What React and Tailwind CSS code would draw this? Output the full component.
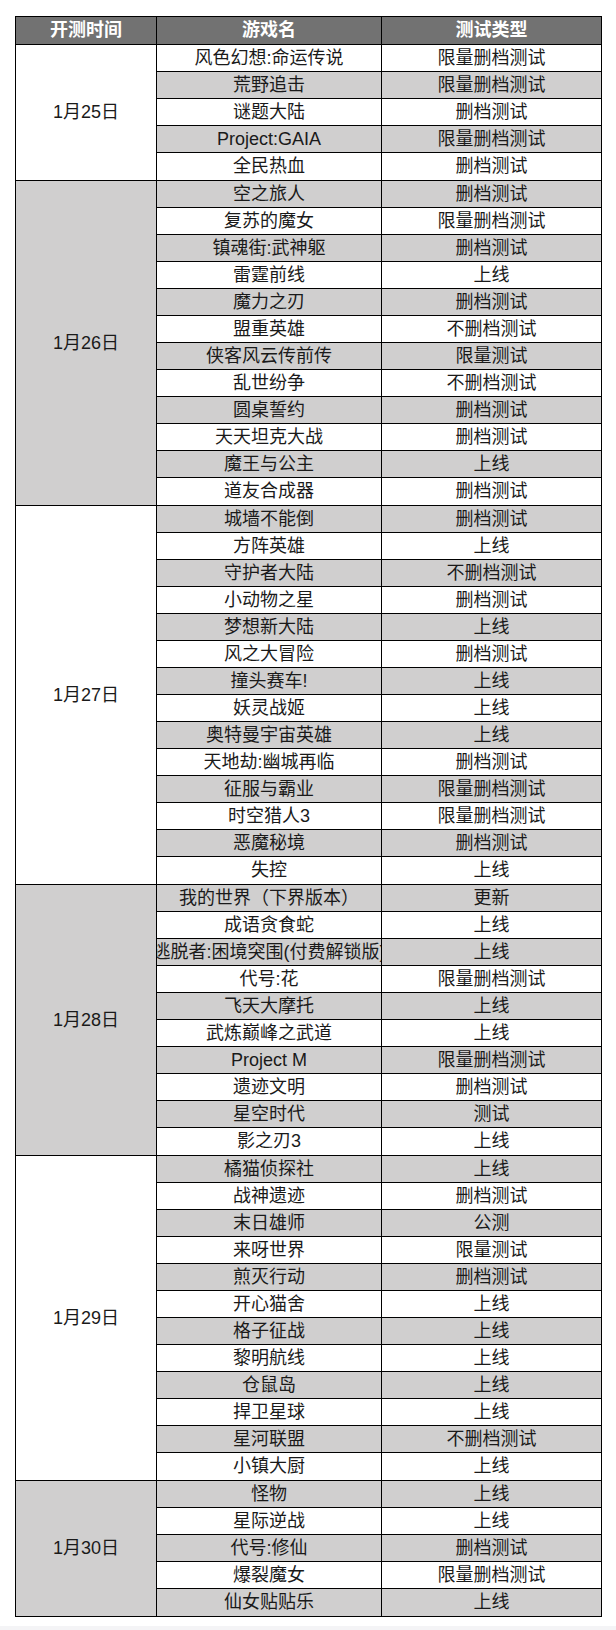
import React from 'react';

const groups = [
  {
    date: '1月25日',
    rows: [
      ['风色幻想:命运传说', '限量删档测试'],
      ['荒野追击', '限量删档测试'],
      ['谜题大陆', '删档测试'],
      ['Project:GAIA', '限量删档测试'],
      ['全民热血', '删档测试'],
    ],
  },
  {
    date: '1月26日',
    rows: [
      ['空之旅人', '删档测试'],
      ['复苏的魔女', '限量删档测试'],
      ['镇魂街:武神躯', '删档测试'],
      ['雷霆前线', '上线'],
      ['魔力之刃', '删档测试'],
      ['盟重英雄', '不删档测试'],
      ['侠客风云传前传', '限量测试'],
      ['乱世纷争', '不删档测试'],
      ['圆桌誓约', '删档测试'],
      ['天天坦克大战', '删档测试'],
      ['魔王与公主', '上线'],
      ['道友合成器', '删档测试'],
    ],
  },
  {
    date: '1月27日',
    rows: [
      ['城墙不能倒', '删档测试'],
      ['方阵英雄', '上线'],
      ['守护者大陆', '不删档测试'],
      ['小动物之星', '删档测试'],
      ['梦想新大陆', '上线'],
      ['风之大冒险', '删档测试'],
      ['撞头赛车!', '上线'],
      ['妖灵战姬', '上线'],
      ['奥特曼宇宙英雄', '上线'],
      ['天地劫:幽城再临', '删档测试'],
      ['征服与霸业', '限量删档测试'],
      ['时空猎人3', '限量删档测试'],
      ['恶魔秘境', '删档测试'],
      ['失控', '上线'],
    ],
  },
  {
    date: '1月28日',
    rows: [
      ['我的世界（下界版本）', '更新'],
      ['成语贪食蛇', '上线'],
      ['逃脱者:困境突围(付费解锁版)', '上线'],
      ['代号:花', '限量删档测试'],
      ['飞天大摩托', '上线'],
      ['武炼巅峰之武道', '上线'],
      ['Project M', '限量删档测试'],
      ['遗迹文明', '删档测试'],
      ['星空时代', '测试'],
      ['影之刃3', '上线'],
    ],
  },
  {
    date: '1月29日',
    rows: [
      ['橘猫侦探社', '上线'],
      ['战神遗迹', '删档测试'],
      ['末日雄师', '公测'],
      ['来呀世界', '限量测试'],
      ['煎灭行动', '删档测试'],
      ['开心猫舍', '上线'],
      ['格子征战', '上线'],
      ['黎明航线', '上线'],
      ['仓鼠岛', '上线'],
      ['捍卫星球', '上线'],
      ['星河联盟', '不删档测试'],
      ['小镇大厨', '上线'],
    ],
  },
  {
    date: '1月30日',
    rows: [
      ['怪物', '上线'],
      ['星际逆战', '上线'],
      ['代号:修仙', '删档测试'],
      ['爆裂魔女', '限量删档测试'],
      ['仙女贴贴乐', '上线'],
    ],
  },
];

const font = { fontFamily: '"Liberation Sans", "Noto Sans CJK SC", sans-serif' };

function App() {
  let index = 0;

  return (
    <div className="min-h-[1630px] bg-white flex flex-col" style={font}>
      <div className="pt-[16px] pl-[15px] flex-1">
        <div className="w-[587px] border border-black text-[18px] text-[#1a1a1a]">
          <div className="flex h-[28px] bg-[#727272] text-white font-bold border-b border-black">
            <div className="w-[141px] border-r border-black flex items-center justify-center">开测时间</div>
            <div className="w-[225px] border-r border-black flex items-center justify-center">游戏名</div>
            <div className="flex-1 flex items-center justify-center">测试类型</div>
          </div>
          {groups.map((group, gi) => {
            const shaded = gi % 2 === 1;
            return (
              <div
                key={group.date}
                className={`flex ${gi < groups.length - 1 ? 'border-b border-black' : ''}`}
              >
                <div
                  className={`w-[141px] shrink-0 border-r border-black flex items-center justify-center ${shaded ? 'bg-[#d0cfcf]' : 'bg-white'}`}
                >
                  {group.date}
                </div>
                <div className="flex-1 flex flex-col">
                  {group.rows.map(([name, type], ri) => {
                    const gray = index % 2 === 1;
                    index += 1;
                    return (
                      <div
                        key={name}
                        className={`flex h-[27px] ${ri < group.rows.length - 1 ? 'border-b border-black' : 'h-[26px]'} ${gray ? 'bg-[#d0cfcf]' : 'bg-white'}`}
                      >
                        <div className="w-[225px] shrink-0 border-r border-black flex items-center justify-center overflow-hidden whitespace-nowrap">
                          <span className="shrink-0">{name}</span>
                        </div>
                        <div className="flex-1 flex items-center justify-center whitespace-nowrap">{type}</div>
                      </div>
                    );
                  })}
                </div>
              </div>
            );
          })}
        </div>
      </div>
      <div className="h-[4px] bg-[#f4f4f6]" />
    </div>
  );
}

export default App;
